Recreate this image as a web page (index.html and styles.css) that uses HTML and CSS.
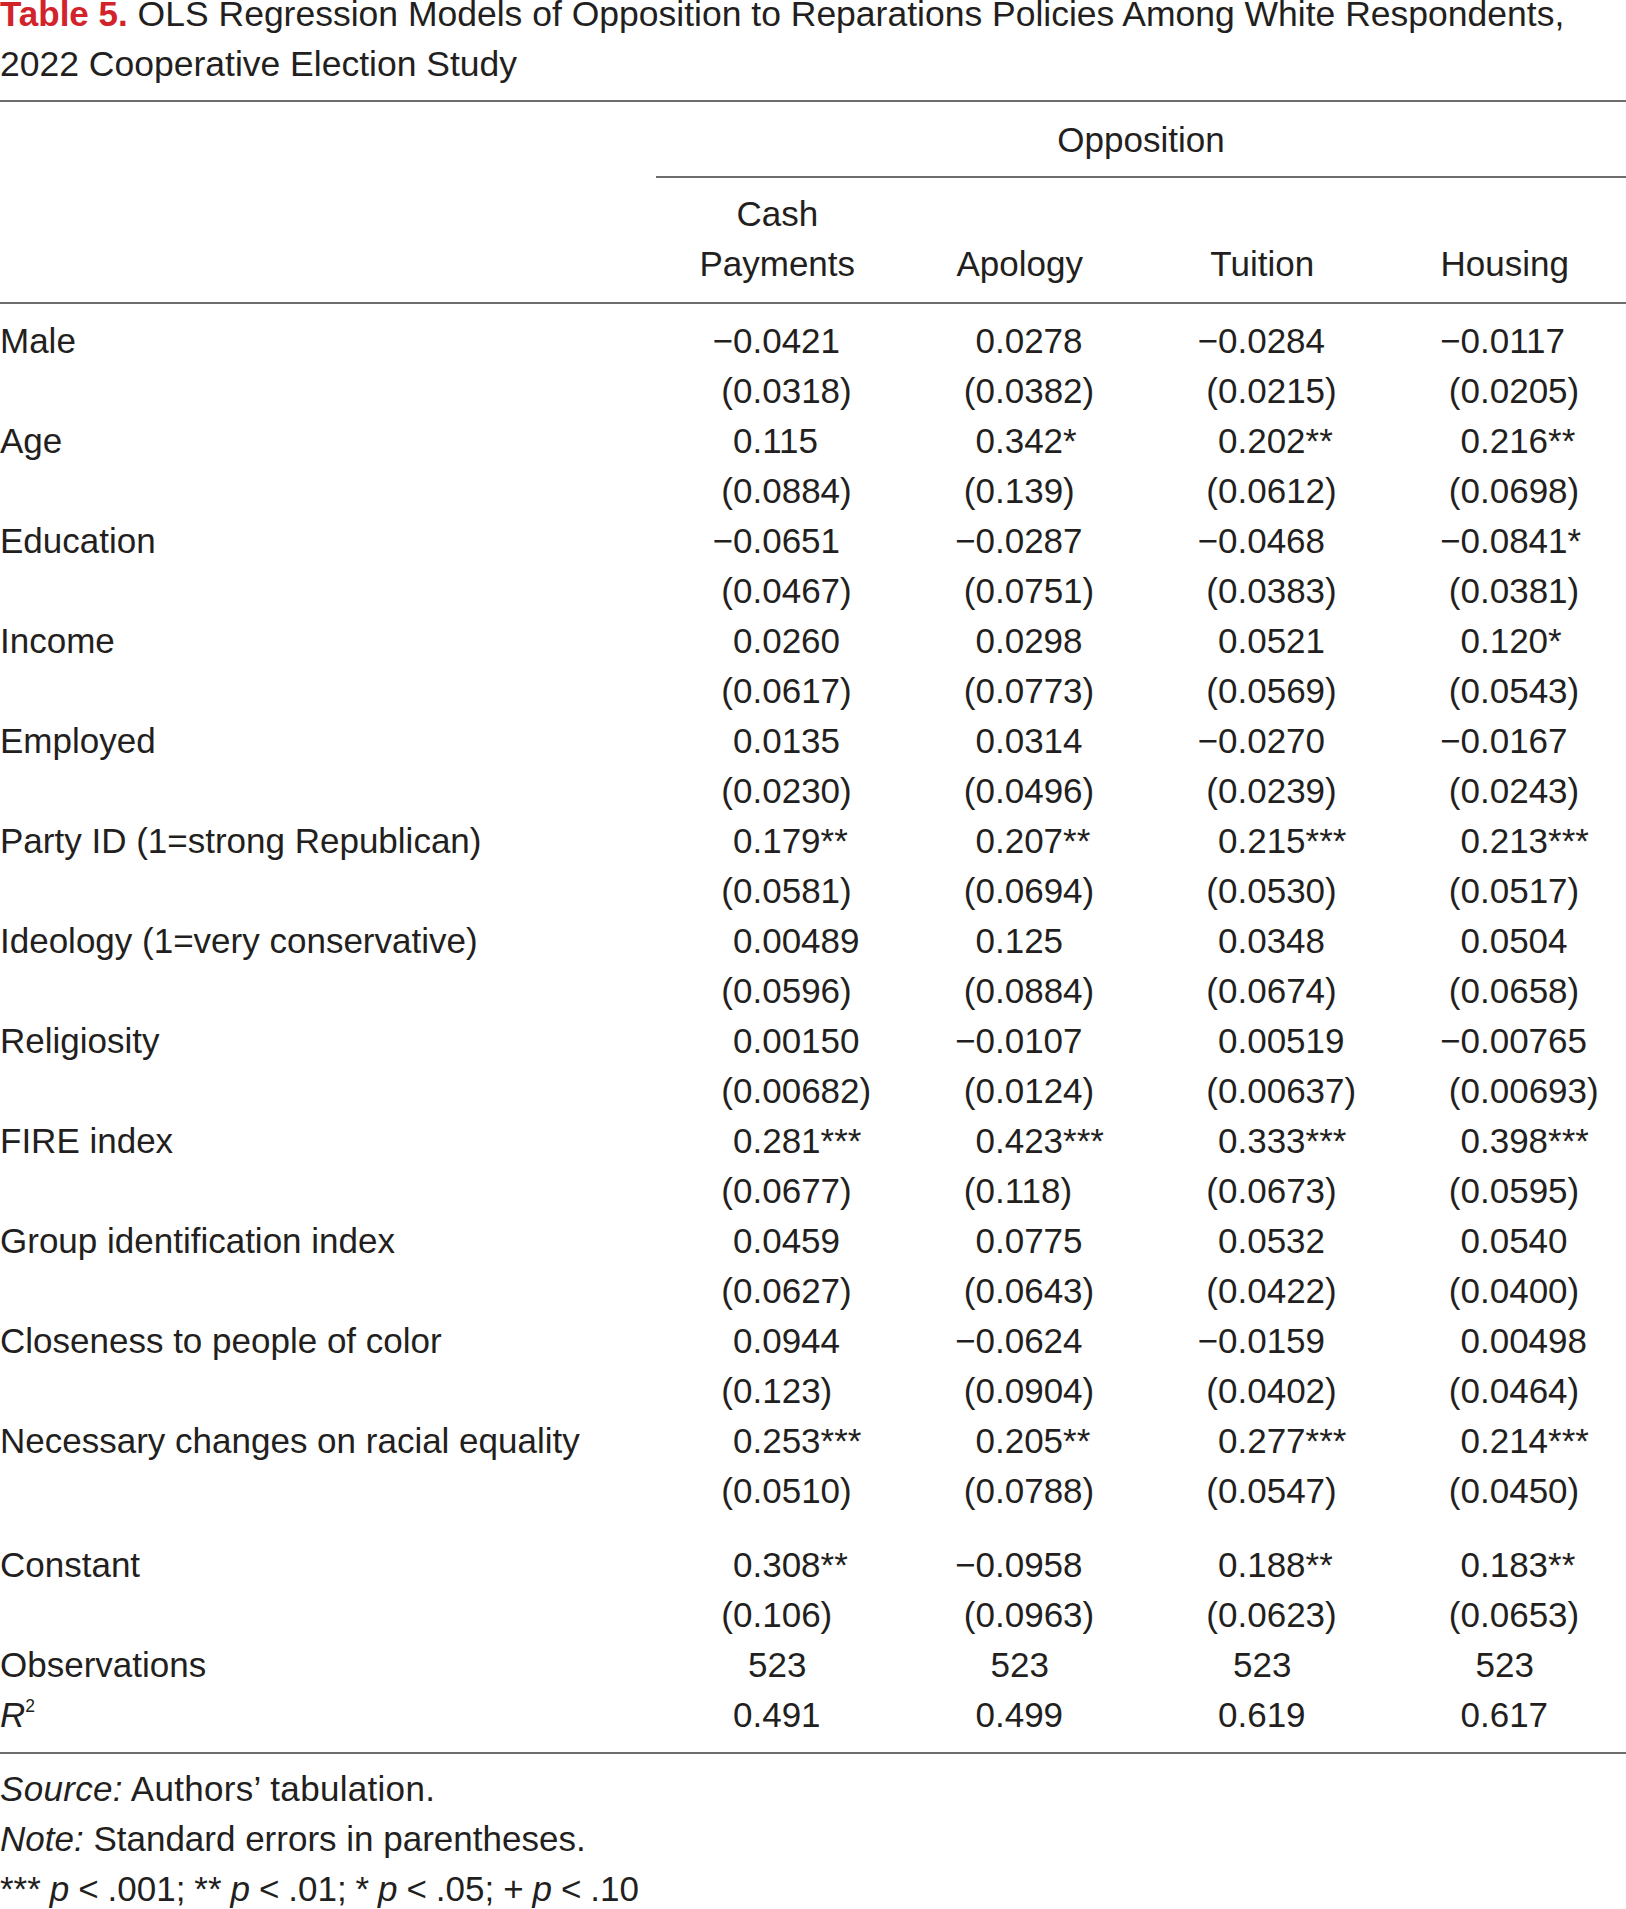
FILE: index.html
```html
<!DOCTYPE html>
<html lang="en">
<head>
<meta charset="utf-8">
<title>Table 5. OLS Regression Models</title>
<link rel="stylesheet" href="styles.css">
</head>
<body>
<div class="page">
  <p class="caption"><span class="tlabel">Table 5.</span> OLS Regression Models of Opposition to Reparations Policies Among White Respondents,<br>2022 Cooperative Election Study</p>
  <table class="reg">
    <colgroup><col class="c-var"><col class="c-num"><col class="c-num"><col class="c-num"><col class="c-num"></colgroup>
    <thead>
      <tr class="span-row"><th class="blank"></th><th colspan="4" class="spanner">Opposition</th></tr>
      <tr class="model-row"><th class="blank"></th><th>Cash<br>Payments</th><th>Apology</th><th>Tuition</th><th>Housing</th></tr>
    </thead>
    <tbody>
      <tr class="coef first"><td class="var">Male</td><td class="n neg">−0.0421</td><td class="n">0.0278</td><td class="n neg">−0.0284</td><td class="n neg">−0.0117</td></tr>
      <tr class="se"><td class="var"></td><td class="n">(0.0318)</td><td class="n">(0.0382)</td><td class="n">(0.0215)</td><td class="n">(0.0205)</td></tr>
      <tr class="coef"><td class="var">Age</td><td class="n">0.115</td><td class="n">0.342*</td><td class="n">0.202**</td><td class="n">0.216**</td></tr>
      <tr class="se"><td class="var"></td><td class="n">(0.0884)</td><td class="n">(0.139)</td><td class="n">(0.0612)</td><td class="n">(0.0698)</td></tr>
      <tr class="coef"><td class="var">Education</td><td class="n neg">−0.0651</td><td class="n neg">−0.0287</td><td class="n neg">−0.0468</td><td class="n neg">−0.0841*</td></tr>
      <tr class="se"><td class="var"></td><td class="n">(0.0467)</td><td class="n">(0.0751)</td><td class="n">(0.0383)</td><td class="n">(0.0381)</td></tr>
      <tr class="coef"><td class="var">Income</td><td class="n">0.0260</td><td class="n">0.0298</td><td class="n">0.0521</td><td class="n">0.120*</td></tr>
      <tr class="se"><td class="var"></td><td class="n">(0.0617)</td><td class="n">(0.0773)</td><td class="n">(0.0569)</td><td class="n">(0.0543)</td></tr>
      <tr class="coef"><td class="var">Employed</td><td class="n">0.0135</td><td class="n">0.0314</td><td class="n neg">−0.0270</td><td class="n neg">−0.0167</td></tr>
      <tr class="se"><td class="var"></td><td class="n">(0.0230)</td><td class="n">(0.0496)</td><td class="n">(0.0239)</td><td class="n">(0.0243)</td></tr>
      <tr class="coef"><td class="var">Party ID (1=strong Republican)</td><td class="n">0.179**</td><td class="n">0.207**</td><td class="n">0.215***</td><td class="n">0.213***</td></tr>
      <tr class="se"><td class="var"></td><td class="n">(0.0581)</td><td class="n">(0.0694)</td><td class="n">(0.0530)</td><td class="n">(0.0517)</td></tr>
      <tr class="coef"><td class="var">Ideology (1=very conservative)</td><td class="n">0.00489</td><td class="n">0.125</td><td class="n">0.0348</td><td class="n">0.0504</td></tr>
      <tr class="se"><td class="var"></td><td class="n">(0.0596)</td><td class="n">(0.0884)</td><td class="n">(0.0674)</td><td class="n">(0.0658)</td></tr>
      <tr class="coef"><td class="var">Religiosity</td><td class="n">0.00150</td><td class="n neg">−0.0107</td><td class="n">0.00519</td><td class="n neg">−0.00765</td></tr>
      <tr class="se"><td class="var"></td><td class="n">(0.00682)</td><td class="n">(0.0124)</td><td class="n">(0.00637)</td><td class="n">(0.00693)</td></tr>
      <tr class="coef"><td class="var">FIRE index</td><td class="n">0.281***</td><td class="n">0.423***</td><td class="n">0.333***</td><td class="n">0.398***</td></tr>
      <tr class="se"><td class="var"></td><td class="n">(0.0677)</td><td class="n">(0.118)</td><td class="n">(0.0673)</td><td class="n">(0.0595)</td></tr>
      <tr class="coef"><td class="var">Group identification index</td><td class="n">0.0459</td><td class="n">0.0775</td><td class="n">0.0532</td><td class="n">0.0540</td></tr>
      <tr class="se"><td class="var"></td><td class="n">(0.0627)</td><td class="n">(0.0643)</td><td class="n">(0.0422)</td><td class="n">(0.0400)</td></tr>
      <tr class="coef"><td class="var">Closeness to people of color</td><td class="n">0.0944</td><td class="n neg">−0.0624</td><td class="n neg">−0.0159</td><td class="n">0.00498</td></tr>
      <tr class="se"><td class="var"></td><td class="n">(0.123)</td><td class="n">(0.0904)</td><td class="n">(0.0402)</td><td class="n">(0.0464)</td></tr>
      <tr class="coef"><td class="var">Necessary changes on racial equality</td><td class="n">0.253***</td><td class="n">0.205**</td><td class="n">0.277***</td><td class="n">0.214***</td></tr>
      <tr class="se"><td class="var"></td><td class="n">(0.0510)</td><td class="n">(0.0788)</td><td class="n">(0.0547)</td><td class="n">(0.0450)</td></tr>
      <tr class="coef gap"><td class="var">Constant</td><td class="n">0.308**</td><td class="n neg">−0.0958</td><td class="n">0.188**</td><td class="n">0.183**</td></tr>
      <tr class="se"><td class="var"></td><td class="n">(0.106)</td><td class="n">(0.0963)</td><td class="n">(0.0623)</td><td class="n">(0.0653)</td></tr>
      <tr class="stat obs"><td class="var">Observations</td><td class="c">523</td><td class="c">523</td><td class="c">523</td><td class="c">523</td></tr>
      <tr class="stat last"><td class="var"><i>R</i><sup>2</sup></td><td class="n">0.491</td><td class="n">0.499</td><td class="n">0.619</td><td class="n">0.617</td></tr>
    </tbody>
  </table>
  <div class="notes">
    <p class="src"><i>Source:</i> Authors’ tabulation.</p>
    <p><i>Note:</i> Standard errors in parentheses.</p>
    <p class="sig">*** <i>p</i> &lt; .001; ** <i>p</i> &lt; .01; * <i>p</i> &lt; .05; + <i>p</i> &lt; .10</p>
  </div>
</div>
</body>
</html>
```
FILE: styles.css
```css
html, body {
  margin: 0;
  padding: 0;
  background: #ffffff;
}

body {
  font-family: "Liberation Sans", Arial, sans-serif;
  color: #231f20;
  font-size: 35px;
  line-height: 50px;
}

.page {
  width: 1626px;
}

.caption {
  margin: -11px 0 11px 0;
  font-size: 35.5px;
  line-height: 50px;
}

.tlabel {
  color: #d2232a;
  font-weight: bold;
  font-size: 35px;
}

.reg {
  width: 1626px;
  table-layout: fixed;
  border-collapse: separate;
  border-spacing: 0;
  border-top: 2px solid #6d6d6d;
}

.c-var { width: 656px; }
.c-num { width: 242.5px; }

.reg th,
.reg td {
  padding: 0;
  font-weight: normal;
  line-height: 50px;
  vertical-align: bottom;
  white-space: nowrap;
}

.span-row th {
  padding-top: 13px;
  padding-bottom: 11px;
}

.spanner {
  text-align: center;
  border-bottom: 2px solid #6d6d6d;
}

.model-row th {
  text-align: center;
  padding-top: 11px;
  padding-bottom: 13px;
  border-bottom: 2px solid #6d6d6d;
}

.reg td.var {
  text-align: left;
}

.reg td.n {
  text-align: left;
  padding-left: 77px;
}

.reg td.neg {
  text-indent: -0.584em;
}

.se td.n {
  text-indent: -0.333em;
}

.reg td.c {
  text-align: center;
}

.first td {
  padding-top: 12px;
}

.gap td {
  padding-top: 24px;
}

.last td {
  padding-bottom: 12px;
  border-bottom: 2px solid #6d6d6d;
}

sup {
  font-size: 0.5em;
  line-height: 0;
  vertical-align: 0.85em;
}

.notes {
  padding-top: 10px;
}

.notes p {
  margin: 0;
  line-height: 50px;
}

.notes .src {
  letter-spacing: 0.3px;
}

.notes .sig {
  word-spacing: -0.8px;
}
```
